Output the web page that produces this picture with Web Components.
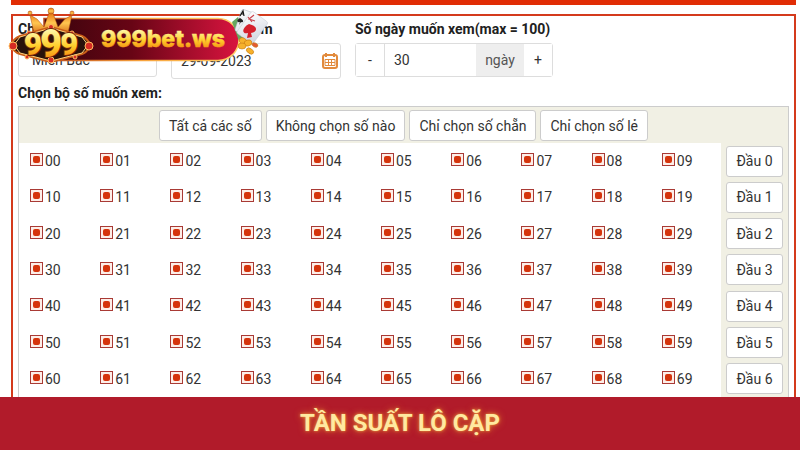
<!DOCTYPE html>
<html lang="vi">
<head>
<meta charset="utf-8">
<title>Tần suất lô cặp</title>
<style>
body {
	margin: 0;
	background: #fff;
	color: #333;
	font: 14px/20px Roboto, "Liberation Sans", sans-serif;
}
</style>
</head>
<body>
<stat-page>
	<brand-badge slot="badge"></brand-badge>
	<filter-form slot="content"></filter-form>
	<number-picker slot="content" rows="7"></number-picker>
	<title-banner slot="footer">TẦN SUẤT LÔ CẶP</title-banner>
</stat-page>

<script>
const page = document.createElement('template');
page.innerHTML = `
<div class="bar"></div>
<main><slot name="content"></slot></main>
<slot name="footer"></slot>
<slot name="badge"></slot>
<style>
:host {
	position: relative;
	display: flex;
	flex-direction: column;
	min-height: 100vh;
}
.bar {
	height: 5px;
	margin: 0 4px 9px 11px;
	background: #e12d05;
}
main {
	flex: 1;
	display: flex;
	flex-direction: column;
	margin: 0 4px 0 11px;
	padding: 3px 5px 0;
	border: 2px solid #d43a1c;
	border-bottom: 0;
}
</style>
`;

const form = document.createElement('template');
form.innerHTML = `
<div class="field region">
	<label for="region">Chọn miền</label>
	<select id="region"><option>Miền Bắc</option><option>Miền Trung</option><option>Miền Nam</option></select>
</div>
<div class="field date">
	<label for="date">Ngày muốn xem</label>
	<div class="box">
		<input id="date" type="text" value="29-09-2023">
		<svg width="16" height="16" viewBox="0 0 16 16" fill="none" stroke="#e28a3c">
			<rect x="1" y="2" width="14" height="13" rx="2" stroke-width="2"/>
			<path d="M4 0v4M12 0v4" stroke-width="2"/>
			<path d="M3 6.5h10v6H3zM3 9.5h10M6.5 6.5v6M9.5 6.5v6"/>
		</svg>
	</div>
</div>
<div class="field">
	<label for="days">Số ngày muốn xem(max = 100)</label>
	<div class="box stepper">
		<button type="button" id="minus">-</button>
		<input id="days" type="text" value="30">
		<span>ngày</span>
		<button type="button" id="plus">+</button>
	</div>
</div>
<style>
:host {
	display: flex;
	gap: 14px;
}
.field { width: 198px; }
.region { width: 139px; }
.date { width: 170px; }
label {
	display: block;
	margin-bottom: 4px;
	color: #212121;
	font-weight: bold;
	white-space: nowrap;
}
select, input, button {
	box-sizing: border-box;
	min-width: 0;
	color: #333;
	font: inherit;
}
select {
	appearance: none;
	width: 100%;
	height: 34px;
	padding: 0 13px;
	border: 1px solid #ddd;
	border-radius: 3px;
	background: linear-gradient(#666, #666) no-repeat right 8px center / 4px 1px #fff;
}
.box {
	box-sizing: border-box;
	display: flex;
	align-items: center;
	height: 36px;
	border: 1px solid #ddd;
	border-radius: 3px;
}
.date .box { padding-right: 2px; }
.box input {
	flex: 1;
	height: 100%;
	padding: 0 9px;
	border: 0;
	background: none;
}
.stepper { height: 34px; }
.stepper button {
	width: 28px;
	height: 100%;
	padding: 0;
	border: 0;
	background: #fff;
}
.stepper input { border-left: 1px solid #ddd; }
.stepper span {
	width: 48px;
	background: #eee;
	color: #555;
	line-height: 32px;
	text-align: center;
}
</style>
`;

const picker = document.createElement('template');
picker.innerHTML = `
<h2>Chọn bộ số muốn xem:</h2>
<div class="frame">
	<div class="tools">
		<button type="button" data-pick="all">Tất cả các số</button>
		<button type="button" data-pick="none">Không chọn số nào</button>
		<button type="button" data-pick="even">Chỉ chọn số chẵn</button>
		<button type="button" data-pick="odd">Chỉ chọn số lẻ</button>
	</div>
	<div class="rows"></div>
</div>
<style>
:host {
	flex: 1;
	display: flex;
	flex-direction: column;
	margin-top: 4px;
}
h2 {
	margin: 0 0 3px;
	color: #212121;
	font: inherit;
	font-weight: bold;
}
.frame {
	flex: 1;
	display: flex;
	flex-direction: column;
	border: 1px solid #ccc;
	border-bottom: 0;
	background: #f1f0e4;
}
.tools {
	display: flex;
	justify-content: center;
	gap: 4px;
	padding: 3px 0 2px;
}
button {
	height: 31px;
	padding: 0 9px;
	border: 1px solid #ccc;
	border-radius: 3px;
	background: #fff;
	color: #333;
	font: inherit;
	white-space: nowrap;
}
.rows {
	flex: 1;
	display: grid;
	grid-auto-rows: 1fr;
}
.row {
	display: flex;
	align-items: stretch;
}
.numbers {
	flex: 1;
	display: grid;
	grid-template-columns: repeat(10, 1fr);
	align-items: center;
	background: #fff;
}
.head {
	width: 57px;
	padding: 0 5px;
	display: flex;
	align-items: center;
}
.head button { width: 57px; }
label {
	display: flex;
	align-items: flex-start;
	gap: 2px;
	padding-left: 11px;
}
label input {
	appearance: none;
	width: 13px;
	height: 13px;
	margin: 2px 0 0;
	border: 1px solid #a93a35;
	background: #fdeee8;
}
label input:checked::before {
	content: '';
	display: block;
	width: 7px;
	height: 7px;
	margin: 2px;
	border-radius: 2px;
	background: #d5340c;
}
</style>
`;

const badge = document.createElement('template');
badge.innerHTML = `
<svg width="276" height="70" viewBox="0 0 276 70">
	<defs>
		<linearGradient id="pill"><stop offset="0" stop-color="#38040c"/><stop offset=".45" stop-color="#680515"/><stop offset="1" stop-color="#d9143f"/></linearGradient>
		<linearGradient id="rim"><stop offset="0" stop-color="#b8461c"/><stop offset=".5" stop-color="#f8a33c"/><stop offset="1" stop-color="#ffcf67"/></linearGradient>
		<linearGradient id="gold" x2="0" y2="1"><stop offset=".2" stop-color="#fff6a0"/><stop offset=".55" stop-color="#ffcf2b"/><stop offset=".85" stop-color="#f58a12"/></linearGradient>
		<linearGradient id="crown" x2="0" y2="1"><stop offset="0" stop-color="#e87512"/><stop offset=".5" stop-color="#ffc750"/><stop offset="1" stop-color="#d9741c"/></linearGradient>
		<linearGradient id="card" x2="1" y2="1"><stop offset="0" stop-color="#fff"/><stop offset="1" stop-color="#ced4df"/></linearGradient>
	</defs>
	<path d="M44 18.500H218a21 21 0 0 1 0 42H44z" fill="url(#pill)" stroke="url(#rim)" stroke-width="1.500"/>
	<g>
		<path d="M232 22l6-5 8 20-7 4z" fill="#65a660"/>
		<rect x="238" y="11" width="16" height="23" rx="2" fill="url(#card)" stroke="#aab1bd" stroke-width=".5" transform="rotate(19 246 22)"/>
		<path d="M240 16l3-5 1 5M241 14h3" fill="none" stroke="#111" stroke-width="1.200"/>
		<path d="M240 18c-4 2-3 5 0 4l-1 3 2-3c3 1 3-2-1-4z" fill="#222"/>
		<rect x="242" y="14" width="20" height="27" rx="2" fill="url(#card)" stroke="#c6cad3" stroke-width=".5" transform="rotate(36 252 28)"/>
		<path d="M248 17l4 5M254 15l-5 4 6 2" fill="none" stroke="#c9434c" stroke-width="1.200"/>
		<path d="M249 24c-8 4-7 11-1 9l-1 5 5-1-1-4c7-1 7-7-2-9z" fill="#d6202c"/>
		<g fill="#f6b12b" stroke="#c77912" stroke-width=".6">
			<ellipse cx="243" cy="41" rx="4" ry="3" transform="rotate(25 243 41)"/>
			<ellipse cx="248" cy="43" rx="4" ry="3" transform="rotate(-15 248 43)"/>
			<ellipse cx="242" cy="46" rx="4" ry="3"/>
			<ellipse cx="250" cy="51" rx="4" ry="2.500" transform="rotate(35 250 51)"/>
			<ellipse cx="255" cy="45" rx="3" ry="2" fill="#e45a34" transform="rotate(25 255 45)"/>
		</g>
	</g>
	<g stroke="#a8480c" stroke-width=".5" fill="url(#crown)">
		<path d="M34 33l-4-18 7 4 7 8 5-14h4l5 14 7-8 7-4-4 18q-17-7-34 0z"/>
		<circle cx="30" cy="13" r="2"/><circle cx="51" cy="11" r="3"/><circle cx="72" cy="13" r="2"/>
	</g>
	<path d="M51 27L82 36q6 3 8 9-2 7-8 9L51 62 20 54q-7-2-9-9 2-6 9-9z" fill="#29120b" stroke="#c95e18" stroke-width="2"/>
	<path d="M51 28L82 37l6 8-6 8L51 61 20 53l-6-8 6-8z" fill="none" stroke="#ffd07b"/>
	<g fill="#d52b24" stroke="#ffbd61">
		<circle cx="13" cy="46" r="4"/><circle cx="89" cy="46" r="4"/>
		<circle cx="51" cy="27" r="2.500"/><circle cx="51" cy="60" r="3"/>
		<circle cx="29" cy="33" r="2"/><circle cx="72" cy="33" r="2"/>
		<circle cx="27" cy="57" r="2"/><circle cx="75" cy="57" r="2"/>
	</g>
	<g font-family="Roboto, sans-serif" font-weight="900" text-anchor="middle" fill="url(#gold)" stroke="#752405" stroke-width="2" paint-order="stroke">
		<text x="33" y="55" font-size="32">9</text>
		<text x="69" y="55" font-size="32">9</text>
		<text x="51" y="57" font-size="38">9</text>
	</g>
	<text x="101" y="47" font-family="Inter, sans-serif" font-weight="800" font-size="23" fill="url(#gold)" stroke="url(#gold)" stroke-width=".5">999bet.ws</text>
</svg>
<style>
:host {
	position: absolute;
	top: 0;
	left: 0;
	pointer-events: none;
}
svg { display: block; }
</style>
`;

const banner = document.createElement('template');
banner.innerHTML = `
<h1><slot></slot></h1>
<style>
:host {
	display: block;
	padding: 12px 0 13px;
	background: #b11b2a;
}
h1 {
	margin: 0;
	color: #ffe9a0;
	font-size: 24px;
	font-weight: bold;
	line-height: 28px;
	text-align: center;
	text-shadow: 0 0 3px #e89a3c, 0 0 7px #e07a30;
}
</style>
`;

class StatPage extends HTMLElement {
	connectedCallback() {
		this.attachShadow({ mode: 'open' }).appendChild(page.content.cloneNode(true));
	}
}

class FilterForm extends HTMLElement {
	connectedCallback() {
		const shadow = this.attachShadow({ mode: 'open' });
		shadow.appendChild(form.content.cloneNode(true));
		const days = shadow.getElementById('days');
		const step = n => {
			days.value = Math.min(100, Math.max(1, Number(days.value) + n));
		};
		shadow.getElementById('minus').addEventListener('click', () => step(-1));
		shadow.getElementById('plus').addEventListener('click', () => step(1));
	}
}

/**
 * Grid of two-digit numbers, ten to a row.
 * The button at the end of a row switches that whole row.
 */
class NumberPicker extends HTMLElement {
	connectedCallback() {
		const shadow = this.attachShadow({ mode: 'open' });
		shadow.appendChild(picker.content.cloneNode(true));
		const rows = shadow.querySelector('.rows');

		for (let r = 0; r < Number(this.getAttribute('rows')); r++) {
			const row = document.createElement('div');
			row.className = 'row';
			let cells = '';
			for (let c = 0; c < 10; c++) {
				cells += `<label><input type="checkbox" value="${r * 10 + c}" checked>${r}${c}</label>`;
			}
			row.innerHTML = `<div class="numbers">${cells}</div><div class="head"><button type="button">Đầu ${r}</button></div>`;
			row.querySelector('button').addEventListener('click', () => {
				const boxes = [...row.querySelectorAll('input')];
				const on = !boxes.every(box => box.checked);
				boxes.forEach(box => { box.checked = on; });
			});
			rows.appendChild(row);
		}

		const rules = {
			all: () => true,
			none: () => false,
			even: n => n % 2 === 0,
			odd: n => n % 2 === 1
		};
		shadow.querySelectorAll('[data-pick]').forEach(button => {
			button.addEventListener('click', () => {
				rows.querySelectorAll('input').forEach(box => {
					box.checked = rules[button.dataset.pick](Number(box.value));
				});
			});
		});
	}
}

class BrandBadge extends HTMLElement {
	connectedCallback() {
		this.attachShadow({ mode: 'open' }).appendChild(badge.content.cloneNode(true));
	}
}

class TitleBanner extends HTMLElement {
	connectedCallback() {
		this.attachShadow({ mode: 'open' }).appendChild(banner.content.cloneNode(true));
	}
}

window.customElements.define('stat-page', StatPage);
window.customElements.define('filter-form', FilterForm);
window.customElements.define('number-picker', NumberPicker);
window.customElements.define('brand-badge', BrandBadge);
window.customElements.define('title-banner', TitleBanner);
</script>
</body>
</html>
